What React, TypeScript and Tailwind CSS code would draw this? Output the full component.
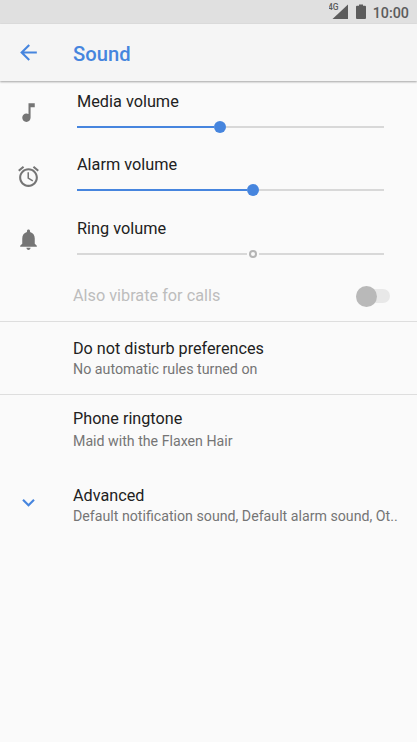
import React from 'react';

const MUSIC_NOTE = 'M12 3v10.55c-.59-.34-1.27-.55-2-.55-2.21 0-4 1.79-4 4s1.79 4 4 4 4-1.79 4-4V7h4V3h-6z';
const ALARM =
  'M22 5.72l-4.6-3.86-1.29 1.53 4.6 3.86L22 5.72zM7.88 3.39L6.6 1.86 2 5.71l1.29 1.53 4.59-3.85zM12.5 8H11v6l4.75 2.85.75-1.23-4-2.37V8zM12 4c-4.97 0-9 4.03-9 9s4.02 9 9 9c4.97 0 9-4.03 9-9s-4.03-9-9-9zm0 16c-3.87 0-7-3.13-7-7s3.13-7 7-7 7 3.13 7 7-3.13 7-7 7z';
const BELL =
  'M12 22c1.1 0 2-.9 2-2h-4c0 1.1.89 2 2 2zm6-6v-5c0-3.07-1.64-5.64-4.5-6.32V4c0-.83-.67-1.5-1.5-1.5s-1.5.67-1.5 1.5v.68C7.63 5.36 6 7.92 6 11v5l-2 2v1h16v-1l-2-2z';
const ARROW_BACK = 'M20 11H7.83l5.59-5.59L12 4l-8 8 8 8 1.41-1.41L7.83 13H20v-2z';
const CHEVRON_DOWN = 'M7.41 8.59L12 13.17l4.59-4.58L18 10l-6 6-6-6 1.41-1.41z';

const Icon = ({ path, className }: { path: string; className?: string }) => (
  <svg viewBox="0 0 24 24" fill="currentColor" className={className}>
    <path d={path} />
  </svg>
);

type VolumeRowProps = {
  icon: string;
  iconClass: string;
  label: string;
  value: number;
  muted?: boolean;
};

const VolumeRow = ({ icon, iconClass, label, value, muted }: VolumeRowProps) => (
  <div className="flex h-[63.5px]">
    <div className="w-[77px] pt-[19px] pl-[15.5px] text-[#757575]">
      <Icon path={icon} className={iconClass} />
    </div>
    <div className="w-[307px] pt-[10.5px]">
      <div className="text-[16.3px] leading-5 text-[#212121]">{label}</div>
      <div className="mt-[9px] flex h-3 items-center">
        <div className={muted ? 'h-[2px] bg-[#d8d8d8]' : 'h-[2px] bg-[#4685de]'} style={{ width: `calc(${value}% - 6px)` }} />
        {muted ? (
          <div className="flex w-3 justify-center">
            <div className="size-2 rounded-full border-2 border-[#b5b5b5]" />
          </div>
        ) : (
          <div className="size-3 shrink-0 rounded-full bg-[#4685de]" />
        )}
        <div className="h-[2px] flex-1 bg-[#d8d8d8]" />
      </div>
    </div>
  </div>
);

const App = () => {
  return (
    <div className="h-[742px] w-[417px] overflow-hidden bg-[#fafafa] font-[Roboto,sans-serif]">
      <div className="flex h-6 items-center justify-end bg-[#e0e0e0] pr-2 text-[#5c5c5c]">
        <svg viewBox="0 0 40 20" className="h-5 w-10" fill="currentColor">
          <text x="-1" y="8.300" fontSize="8.5" fontWeight="500">4G</text>
          <path d="M3.500 17L19 2.500v14.500z" />
          <path d="M30 2.500h4v1.200h2q1 0 1 1V16q0 1-1 1h-8q-1 0-1-1V4.700q0-1 1-1h2z" />
        </svg>
        <span className="mt-[2px] ml-1 text-[14.3px] leading-5 font-medium">10:00</span>
      </div>

      <div className="relative flex h-[57px] items-center bg-[#f5f5f5] shadow-[0_1px_2px_rgba(0,0,0,0.35)] text-[#4685de]">
        <Icon path={ARROW_BACK} className="ml-4 size-[25px]" />
        <h1 className="mt-[4px] ml-8 text-[20.2px] font-medium">Sound</h1>
      </div>

      <VolumeRow icon={MUSIC_NOTE} iconClass="size-[25px]" label="Media volume" value={46.7} />
      <VolumeRow icon={ALARM} iconClass="size-[25px]" label="Alarm volume" value={57.2} />
      <VolumeRow icon={BELL} iconClass="size-[25px]" label="Ring volume" value={57.2} muted />

      <div className="flex h-[50px] items-center justify-between border-b border-[#dedede] pr-[27px] pl-[73px]">
        <span className="text-[16.25px] text-[#bdbdbd]">Also vibrate for calls</span>
        <div className="flex h-[14px] w-[34px] items-center rounded-full bg-[#e8e8e8]">
          <div className="size-[21px] rounded-full bg-[#b9b9b9]" />
        </div>
      </div>

      <div className="h-[73px] border-b border-[#dedede] pt-[17px] pl-[73px]">
        <div className="text-[16.2px] leading-5 text-[#212121]">Do not disturb preferences</div>
        <div className="text-[14.25px] leading-5 text-[#757575]">No automatic rules turned on</div>
      </div>

      <div className="h-[77px] pt-[14px] pl-[73px]">
        <div className="text-[16.2px] leading-5 text-[#212121]">Phone ringtone</div>
        <div className="mt-[2px] text-[14.2px] leading-5 text-[#757575]">Maid with the Flaxen Hair</div>
      </div>

      <div className="flex pt-[14px]">
        <div className="w-[73px] pt-[4px] pl-4 text-[#4685de]">
          <Icon path={CHEVRON_DOWN} className="size-[25px]" />
        </div>
        <div>
          <div className="text-[16.2px] leading-5 text-[#212121]">Advanced</div>
          <div className="text-[14.2px] leading-5 whitespace-nowrap text-[#757575]">
            Default notification sound, Default alarm sound, Ot..
          </div>
        </div>
      </div>
    </div>
  );
};

export default App;
